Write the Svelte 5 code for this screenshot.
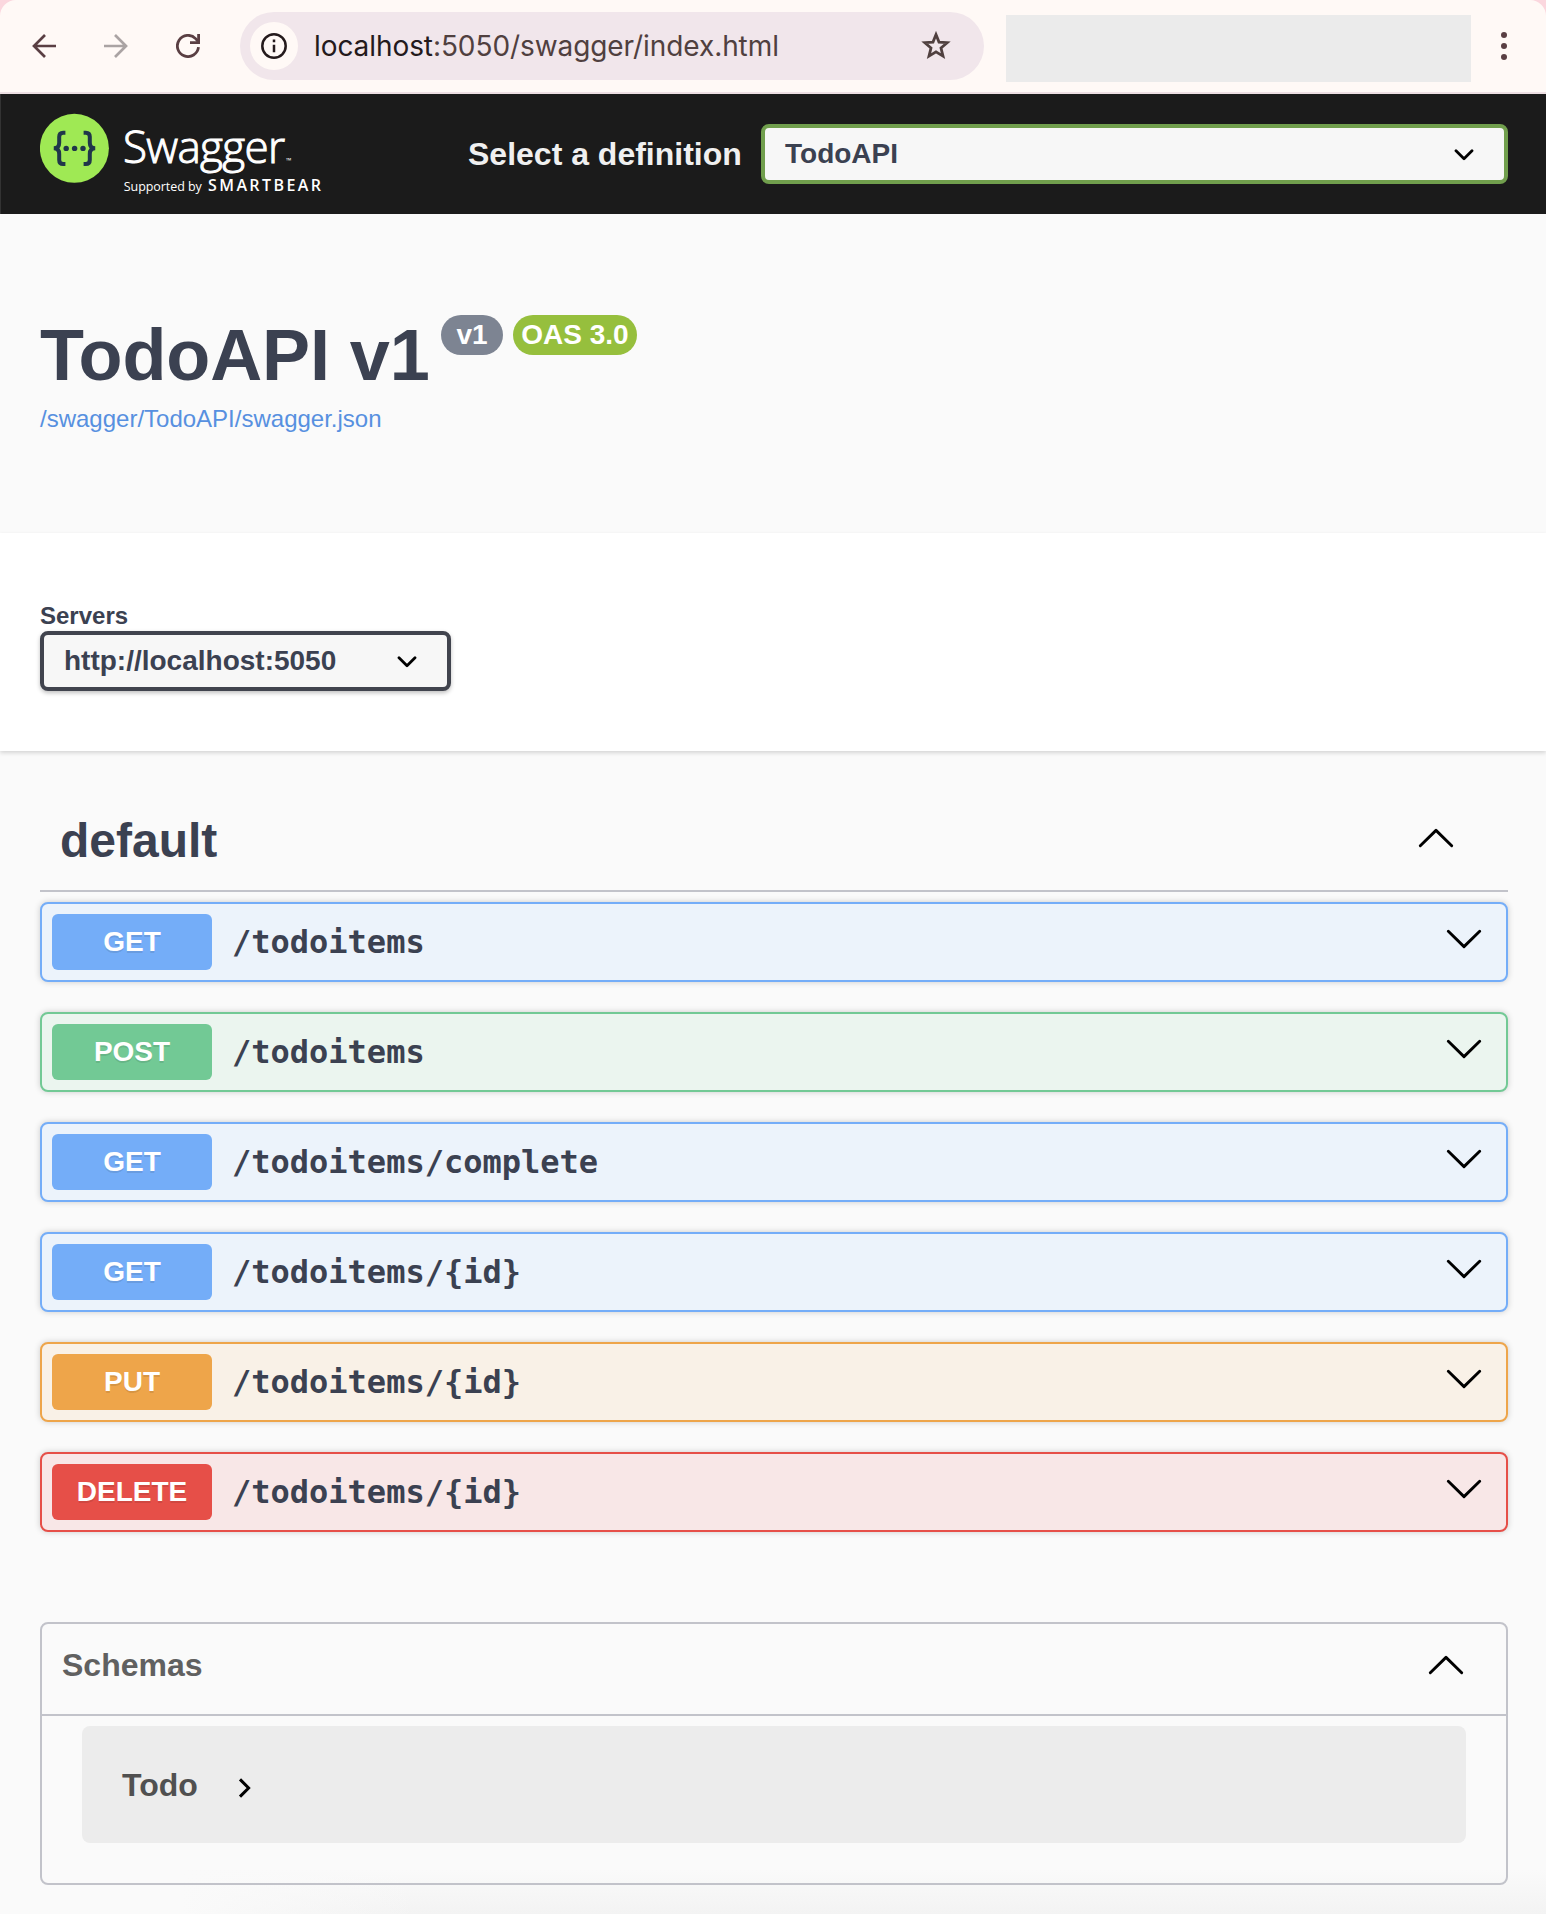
<script>
  const operations = [
    { method: 'GET', path: '/todoitems' },
    { method: 'POST', path: '/todoitems' },
    { method: 'GET', path: '/todoitems/complete' },
    { method: 'GET', path: '/todoitems/{id}' },
    { method: 'PUT', path: '/todoitems/{id}' },
    { method: 'DELETE', path: '/todoitems/{id}' }
  ];
</script>

{#snippet wideChevron(dir)}
  <svg class="wide-chevron" width="36" height="20" viewBox="0 0 36 20" fill="none" stroke="#000" stroke-width="2.9" stroke-linecap="round" stroke-linejoin="round">
    <path d={dir === 'up' ? 'M2.3 17.8 18 2.4 33.7 17.8' : 'M2.3 2.2 18 17.6 33.7 2.2'} />
  </svg>
{/snippet}

{#snippet smallChevron()}
  <svg width="20" height="12" viewBox="0 0 20 12" fill="none" stroke="#000" stroke-width="2.8" stroke-linecap="round" stroke-linejoin="round">
    <path d="M2 1.8 10 9.8 18 1.8" />
  </svg>
{/snippet}

<div class="page">
  <div class="frame">
    <div class="browser">
      <svg class="nav" width="24" height="24" viewBox="0 0 24 24" fill="none" stroke="#5a3f43" stroke-width="2.7">
        <path d="M24 12H2M13 1 2 12l11 11" />
      </svg>
      <svg class="nav" width="24" height="24" viewBox="0 0 24 24" fill="none" stroke="#aaa3a3" stroke-width="2.7">
        <path d="M0 12h22M11 1l11 11-11 11" />
      </svg>
      <svg class="nav" width="24" height="24" viewBox="0 0 24 24" fill="none" stroke="#5a3f43" stroke-width="2.8">
        <path d="M22.5 13.2A10.6 10.6 0 1 1 19.6 4.6L22 7.2" />
        <path d="M22.6 0v8.6H14" />
      </svg>
      <div class="address">
        <span class="site-info">
          <svg width="26" height="26" viewBox="0 0 26 26" fill="none" stroke="#241a1c" stroke-width="2.5">
            <circle cx="13" cy="13" r="11.7" />
            <path d="M13 11.8v7.4M13 6.6v2.6" />
          </svg>
        </span>
        <span class="url"><b>localhost</b>:5050/swagger/index.html</span>
        <svg class="star" width="30" height="30" viewBox="0 0 30 30" fill="none" stroke="#50403f" stroke-width="2.8" stroke-linejoin="miter">
          <path d="M15 3.6 18 11.1 26.2 11.7 20 17 22 25.1 15 20.8 8 25.1 10 17 3.8 11.7 12 11.1Z" />
        </svg>
      </div>
      <div class="blank"></div>
      <svg class="menu" width="6" height="28" viewBox="0 0 6 28" fill="#5a3f43">
        <circle cx="3" cy="3" r="3" /><circle cx="3" cy="14" r="3" /><circle cx="3" cy="25" r="3" />
      </svg>
    </div>
  </div>

  <header class="topbar">
    <svg class="logo" width="300" height="90" viewBox="0 0 300 90">
      <circle cx="34.4" cy="36.3" r="34.5" fill="#9fe954" />
      <g fill="none" stroke="#20364a" stroke-width="4">
        <path d="M25.4 20.7h-2.2q-4 0-4 4v6q0 5.5-5.4 5.6 5.4.1 5.4 5.6v6q0 4 4 4h2.2" />
        <path d="M43.6 20.7h2.2q4 0 4 4v6q0 5.5 5.4 5.6-5.4.1-5.4 5.6v6q0 4-4 4h-2.2" />
      </g>
      <g fill="#20364a">
        <circle cx="26.2" cy="36.4" r="2.7" /><circle cx="34.6" cy="36.4" r="2.7" /><circle cx="43" cy="36.4" r="2.7" />
      </g>
      <g fill="#fff" font-family="'Open Sans', sans-serif">
        <text x="83" y="51" font-size="44" font-weight="300" textLength="162" stroke="#fff" stroke-width="1">Swagger</text>
        <text x="246" y="51" font-size="7">™</text>
        <text x="83.8" y="79.3" font-size="12.5" textLength="78">Supported by</text>
        <text x="168" y="79" font-size="16" font-weight="600" textLength="113">SMARTBEAR</text>
      </g>
    </svg>
    <span class="select-label">Select a definition</span>
    <div class="select definition"><span>TodoAPI</span>{@render smallChevron()}</div>
  </header>

  <section class="info">
    <div class="title-row">
      <h1>TodoAPI v1</h1>
      <span class="badge version">v1</span>
      <span class="badge oas">OAS 3.0</span>
    </div>
    <a class="link" href="#spec">/swagger/TodoAPI/swagger.json</a>
  </section>

  <section class="servers">
    <span class="servers-label">Servers</span>
    <div class="select server"><span>http://localhost:5050</span>{@render smallChevron()}</div>
  </section>

  <main>
    <div class="tag"><h2>default</h2>{@render wideChevron('up')}</div>
    <div class="operations">
      {#each operations as op}
        <div class="op {op.method.toLowerCase()}">
          <span class="method">{op.method}</span>
          <span class="path">{op.path}</span>
          {@render wideChevron('down')}
        </div>
      {/each}
    </div>
    <section class="schemas">
      <div class="schemas-head"><h3>Schemas</h3>{@render wideChevron('up')}</div>
      <div class="model">
        <span>Todo</span>
        <svg width="14" height="22" viewBox="0 0 14 22" fill="none" stroke="#000" stroke-width="3">
          <path d="M2 2.4 10.6 11 2 19.6" />
        </svg>
      </div>
    </section>
  </main>
</div>

<style>
  :global(body) { background: #fafafa; }
  .page, .page * { box-sizing: border-box; }
  .page {
    width: 1546px;
    height: 1914px;
    overflow: hidden;
    background:
      linear-gradient(90deg, #fafafa 180px, rgba(250, 250, 250, 0) 420px),
      linear-gradient(#fafafa 1870px, #f3f3f3 1914px);
    color: #3b4151;
    font-family: 'Liberation Sans', Arial, sans-serif;
  }
  h1, h2, h3 { margin: 0; }
  svg { display: block; flex: none; }

  .frame { background: #fbd7de; }
  .browser {
    height: 94px;
    display: flex;
    align-items: center;
    padding-left: 32px;
    border-bottom: 2px solid #eddfe3;
    border-radius: 16px 16px 0 0;
    background: #fff9f6;
  }
  .nav { margin-right: 48px; }
  .address {
    width: 744px;
    height: 68px;
    margin-left: -8px;
    padding: 0 33px 0 10px;
    display: flex;
    align-items: center;
    border-radius: 34px;
    background: #f1e6eb;
  }
  .site-info {
    width: 48px;
    height: 48px;
    display: grid;
    place-items: center;
    border-radius: 50%;
    background: #fff9f6;
  }
  .url {
    margin-left: 16px;
    font: 28px/40px Inter, sans-serif;
    letter-spacing: -0.08px;
    color: #50403f;
    white-space: nowrap;
  }
  .url b { font-weight: 400; color: #241a1c; }
  .star { margin-left: auto; }
  .blank { width: 465px; height: 67px; margin: 5px 30px 0 22px; background: #ebebeb; }

  .topbar {
    height: 120px;
    padding: 0 38px 0 39px;
    display: flex;
    align-items: center;
    border-left: 1px solid #333;
    background: #1b1b1b;
  }
  .logo { margin-top: 6px; }
  .select-label {
    width: 293px;
    margin-left: 128px;
    padding-top: 1px;
    font-size: 32px;
    font-weight: 700;
    white-space: nowrap;
    color: #f0f0f0;
  }
  .select {
    height: 60px;
    padding: 0 30px 0 20px;
    display: flex;
    align-items: center;
    justify-content: space-between;
    border: 4px solid #41444e;
    border-radius: 8px;
    background: #f7f7f7;
    font-size: 28px;
    font-weight: 700;
  }
  .select svg { margin-top: 1px; }
  .definition { flex: 1; border-color: #719f4d; }

  .info { height: 319px; padding: 100px 40px 0; }
  .title-row { display: flex; align-items: flex-start; height: 91px; }
  h1 { width: 401px; font-size: 72px; line-height: 82px; letter-spacing: -0.1px; white-space: nowrap; }
  .badge {
    height: 40px;
    margin: 1px 10px 0 0;
    border-radius: 20px;
    font-size: 28px;
    line-height: 40px;
    font-weight: 700;
    text-align: center;
    color: #fff;
  }
  .version { width: 62px; background: #7d8492; }
  .oas { width: 124px; background: #96bf3d; }
  .link { display: block; font-size: 24px; line-height: 28px; color: #5790e0; text-decoration: none; }

  .servers {
    height: 218px;
    padding: 68px 40px 0;
    background: #fff;
    box-shadow: 0 2px 4px rgba(0, 0, 0, .15);
  }
  .servers-label { display: block; height: 30px; font-size: 24px; line-height: 30px; font-weight: 700; }
  .server { width: 411px; box-shadow: 0 2px 4px rgba(0, 0, 0, .25); }

  main { padding: 59px 38px 0 40px; }
  .tag {
    height: 82px;
    padding: 0 54px 18px 20px;
    display: flex;
    align-items: center;
    justify-content: space-between;
    border-bottom: 2px solid #c2c3ca;
  }
  .tag .wide-chevron { margin-bottom: 6px; }
  h2 { font-size: 48px; line-height: 56px; }
  .operations { display: flex; flex-direction: column; gap: 30px; margin-top: 10px; }
  .op {
    height: 80px;
    padding: 0 24px 0 10px;
    display: flex;
    align-items: center;
    border: 2px solid var(--c);
    border-radius: 8px;
    background: var(--bg);
    box-shadow: 0 0 6px rgba(0, 0, 0, .19);
  }
  .get { --c: #74adf8; --bg: #ecf3fb; }
  .post { --c: #72c995; --bg: #ebf5ef; }
  .put { --c: #eea54a; --bg: #f9f1e7; }
  .delete { --c: #e64f48; --bg: #f8e7e7; }
  .method {
    width: 160px;
    height: 56px;
    border-radius: 6px;
    background: var(--c);
    color: #fff;
    font-size: 28px;
    line-height: 56px;
    font-weight: 700;
    text-align: center;
    text-shadow: 0 2px 0 rgba(0, 0, 0, .1);
  }
  .path { margin-left: 20px; font: 700 32px/40px 'DejaVu Sans Mono', monospace; }
  .op .wide-chevron { margin: 0 0 6px auto; }

  .schemas { height: 263px; margin-top: 90px; border: 2px solid #c2c3ca; border-radius: 8px; }
  .schemas-head {
    height: 92px;
    padding: 0 42px 8px 20px;
    display: flex;
    align-items: center;
    justify-content: space-between;
    border-bottom: 2px solid #c2c3ca;
  }
  h3 { font-size: 32px; color: #606060; }
  .model {
    height: 117px;
    margin: 10px 40px 0;
    padding: 2px 0 0 40px;
    display: flex;
    align-items: center;
    gap: 40px;
    border-radius: 8px;
    background: #ececec;
    font-size: 32px;
    font-weight: 700;
    color: #505050;
  }
  .model svg { margin-top: 4px; }
</style>
